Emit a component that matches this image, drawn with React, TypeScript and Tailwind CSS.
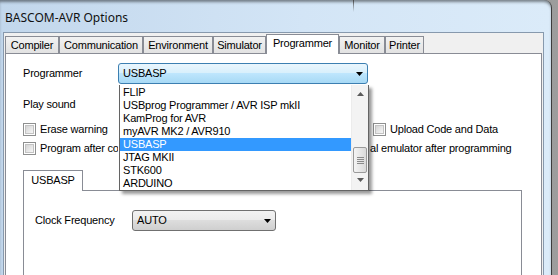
import type { ReactNode } from "react";

const ui = { fontFamily: '"Liberation Sans", Arial, sans-serif' };

const tabs = [
  { label: "Compiler", w: "w-[54px]" },
  { label: "Communication", w: "w-[84px]" },
  { label: "Environment", w: "w-[70px]" },
  { label: "Simulator", w: "w-[53px]" },
  { label: "Programmer", w: "w-[73px]", active: true },
  { label: "Monitor", w: "w-[46px]" },
  { label: "Printer", w: "w-[39px]" },
];

const programmers = [
  "FLIP",
  "USBprog Programmer / AVR ISP mkII",
  "KamProg for AVR",
  "myAVR MK2 / AVR910",
  "USBASP",
  "JTAG MKII",
  "STK600",
  "ARDUINO",
];

function Arrow({ color = "#000" }: { color?: string }) {
  return (
    <svg width="7" height="4" viewBox="0 0 7 4">
      <path d="M0 0h7L3.5 4z" fill={color} />
    </svg>
  );
}

function Checkbox() {
  return (
    <div className="h-[13px] w-[13px] shrink-0 border border-[#8e8f8f] bg-white p-[1px]">
      <div className="h-full w-full border border-[#c3c3c3] bg-[linear-gradient(135deg,#d4d4d4,#f6f6f6)]" />
    </div>
  );
}

function CheckRow({ children }: { children: ReactNode }) {
  return (
    <div className="flex h-[13px] items-center gap-[4px]">
      <Checkbox />
      <span className="whitespace-nowrap leading-none">{children}</span>
    </div>
  );
}

function DropdownList() {
  return (
    <div className="absolute left-0 top-[21px] z-20 flex h-[106px] w-[250px] border-x border-b border-[#646464] bg-white shadow-[3px_3px_3px_rgba(0,0,0,0.4)]">
      <div className="w-[231px] pt-[1px]">
        {programmers.map((p) => (
          <div
            key={p}
            className={`flex h-[13px] items-center whitespace-nowrap pl-[3px] leading-none ${
              p === "USBASP" ? "bg-[#3399ff] text-white" : "text-black"
            }`}
          >
            {p}
          </div>
        ))}
      </div>
      <div className="relative flex w-[17px] flex-col items-center border-l border-[#ececec] bg-[#f3f3f3]">
        <div className="mt-[7px] rotate-180">
          <Arrow color="#5a5a5a" />
        </div>
        <div className="mt-[51px] flex h-[26px] w-[14px] flex-col items-center justify-center gap-[1px] rounded-[2px] border border-[#9a9a9a] bg-[linear-gradient(90deg,#f4f4f4,#dadada)]">
          <div className="h-px w-[7px] bg-[#8a8a8a]" />
          <div className="h-px w-[7px] bg-[#8a8a8a]" />
          <div className="h-px w-[7px] bg-[#8a8a8a]" />
          <div className="h-px w-[7px] bg-[#8a8a8a]" />
        </div>
        <div className="mt-[5px]">
          <Arrow color="#5a5a5a" />
        </div>
      </div>
    </div>
  );
}

export default function App() {
  return (
    <div
      className="relative h-[275px] w-[558px] overflow-hidden bg-[linear-gradient(90deg,#3f3f3f,#9d9d9d)] text-[11px] tracking-[-0.2px] text-black"
      style={ui}
    >
      <div className="flex h-full w-[552px] flex-col rounded-tr-[8px] border-r border-[#3c3c3c] bg-[linear-gradient(90deg,#c2d7ec,#d3e5f6_55%,#dbebf9)] shadow-[inset_0_3px_3px_-1px_rgba(0,0,0,0.45)]">
        {/* title bar */}
        <div className="relative flex h-[32px] shrink-0 items-center pl-[5px] pt-[3px]">
          <span
            className="text-[12px] leading-none tracking-normal text-[#111]"
            style={{ fontFamily: '"Noto Sans", "Open Sans", sans-serif' }}
          >
            BASCOM-AVR Options
          </span>
          <div className="absolute left-[353px] top-0 h-[12px] w-px bg-[linear-gradient(180deg,#4a4a4a,transparent)]" />
        </div>

        {/* client area */}
        <div className="ml-[3px] mr-[7px] flex min-h-0 flex-1 flex-col border-x border-t border-[#8799ad] bg-[#f0f0f0] px-[1px]">
          <div className="relative z-10 flex h-[21px] shrink-0 items-end">
            {tabs.map((t) =>
              t.active ? (
                <div
                  key={t.label}
                  className={`${t.w} flex h-[20px] items-center justify-center border-x border-t border-[#898c95] bg-white pb-[2px]`}
                >
                  {t.label}
                </div>
              ) : (
                <div
                  key={t.label}
                  className={`${t.w} mb-px flex h-[17px] items-center justify-center border-x border-t border-[#898c95] bg-[linear-gradient(180deg,#f2f2f2,#e2e2e2)]`}
                >
                  {t.label}
                </div>
              ),
            )}
          </div>

          {/* panel */}
          <div className="-mt-px flex-1 border border-[#898c95] bg-white pl-[17px]">
            <div className="mt-[9px] flex h-[21px] items-center">
              <span className="w-[95px]">Programmer</span>
              <div className="relative flex h-[21px] w-[250px] items-center justify-between rounded-[3px] border border-[#3c7fb1] bg-[linear-gradient(180deg,#eaf6fd_0%,#d9f0fc_45%,#bee6fd_50%,#a7d9f5_100%)] pl-[4px] pr-[4px]">
                <span>USBASP</span>
                <Arrow />
                <DropdownList />
              </div>
            </div>

            <div className="mt-[13px] flex h-[14px] items-center">Play sound</div>

            <div className="mt-[12px] flex">
              <div className="w-[350px]">
                <CheckRow>Erase warning</CheckRow>
              </div>
              <CheckRow>Upload Code and Data</CheckRow>
            </div>

            <div className="mt-[6px] flex">
              <div className="w-[95px] overflow-hidden">
                <CheckRow>Program after compile</CheckRow>
              </div>
              <span className="ml-[252px] flex h-[13px] items-center whitespace-nowrap leading-none">
                al emulator after programming
              </span>
            </div>

            {/* inner tab control */}
            <div className="mt-[15px] w-[499px]">
              <div className="relative z-10 flex h-[21px]">
                <div className="flex h-[21px] w-[60px] items-center justify-center border-x border-t border-[#898c95] bg-white pb-[1px]">
                  USBASP
                </div>
              </div>
              <div className="-mt-px h-[120px] border border-[#898c95] bg-white pl-[11px]">
                <div className="mt-[19px] flex h-[21px] items-center">
                  <span className="w-[97px]">Clock Frequency</span>
                  <div className="flex h-[21px] w-[144px] items-center justify-between rounded-[3px] border border-[#707070] bg-[linear-gradient(180deg,#f2f2f2_0%,#ebebeb_45%,#dddddd_50%,#cfcfcf_100%)] pl-[4px] pr-[4px]">
                    <span>AUTO</span>
                    <Arrow />
                  </div>
                </div>
              </div>
            </div>
          </div>
        </div>
      </div>
    </div>
  );
}
